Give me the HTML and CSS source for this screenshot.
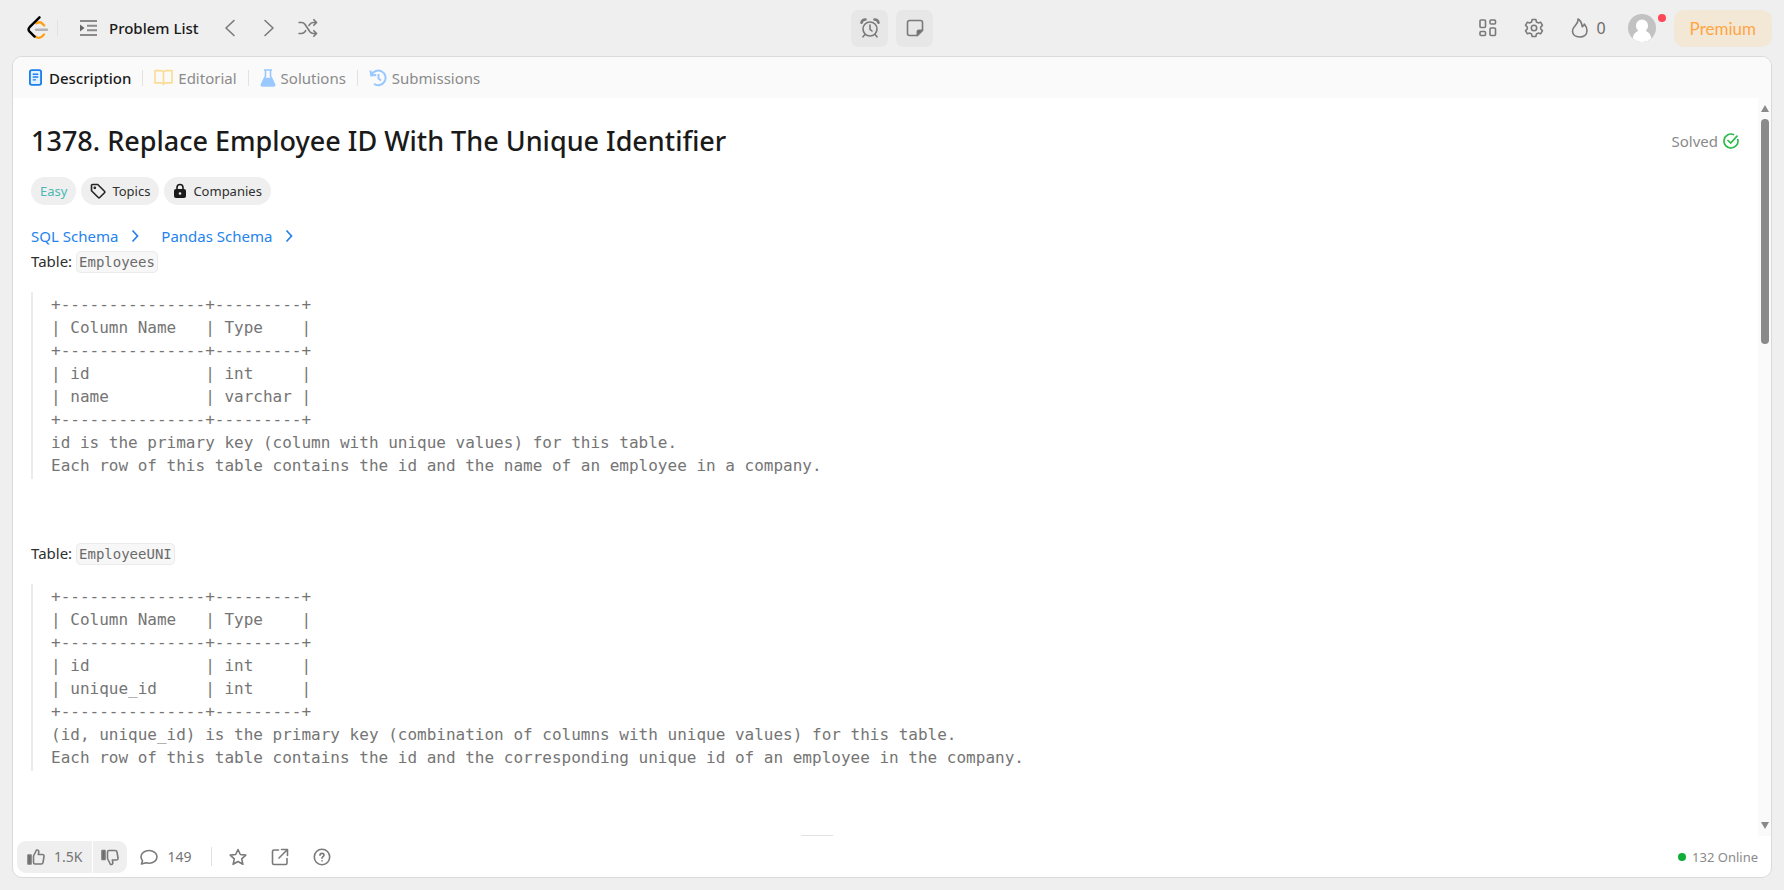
FILE: index.html
```
<!DOCTYPE html>
<html lang="en">
<head>
<meta charset="utf-8">
<title>1378. Replace Employee ID With The Unique Identifier</title>
<link rel="stylesheet" href="styles.css">
</head>
<body>
<header class="topbar">
  <nav class="topbar-left">
    <a class="logo" href="#" aria-label="Home">
      <svg width="22" height="26" viewBox="0 0 22 26" fill="none" stroke-linecap="round" stroke-width="2.4">
        <path d="M9.500 8.300c2-1.400 3.900-1.300 5.500 0l2.200 2.200" stroke="#ffa116"/>
        <path d="M17 19.500l-2 2c-1.900 1.800-4.600 1.800-6.500 0" stroke="#ffa116"/>
        <path d="M9 14.700H20" stroke="#b3b3b3"/>
        <path d="M12.500 2.300L2.600 12.200c-1.300 1.400-1.300 3.100 0 4.500l5 4.900" stroke="#000"/>
      </svg>
    </a>
    <span class="rule"></span>
    <button class="list-button">
      <svg width="18" height="18" viewBox="0 0 18 18" fill="none" stroke="#8a8a8a" stroke-width="2">
        <path d="M1 2h17M8 6.700h10M8 11.300h10M1 16h17"/><path d="M1 5.500v7l4.500-3.500z" fill="#666" stroke="none"/>
      </svg>
      <span>Problem List</span>
    </button>
    <button class="icon-button" aria-label="Previous">
      <svg width="20" height="20" viewBox="0 0 20 20" class="stroke"><path d="M14 2.500L6 10l8 7.500"/></svg>
    </button>
    <button class="icon-button" aria-label="Next">
      <svg width="20" height="20" viewBox="0 0 20 20" class="stroke"><path d="M6 2.500l8 7.500-8 7.500"/></svg>
    </button>
    <button class="icon-button" aria-label="Shuffle">
      <svg width="20" height="20" viewBox="0 0 20 20" class="stroke"><path d="M1 4.500h2.500c1.600 0 2.500.6 3.400 1.800l5 7.400c.9 1.200 1.800 1.800 3.400 1.800h3.200M1 15.500h2.500c1.600 0 2.500-.6 3.400-1.800l.7-1M11 7.500l.9-1.200c.9-1.200 1.800-1.800 3.400-1.800h3.200M15.800 1.700l2.800 2.800-2.800 2.800M15.800 12.700l2.800 2.800-2.800 2.800"/></svg>
    </button>
  </nav>
  <div class="topbar-center">
    <button class="tile" aria-label="Timer">
      <svg width="20" height="20" viewBox="0 0 20 20" class="stroke"><circle cx="10" cy="11" r="7"/><path d="M10 7v4.300l2 1.700M5 16.500l-2 2.300M15 16.500l2 2.300"/><path d="M1.500 4.700C1.900 3 3.500 1.500 5.500 1.500M18.500 4.700C18.100 3 16.500 1.500 14.500 1.500" stroke-width="2.600"/></svg>
    </button>
    <button class="tile" aria-label="Notes">
      <svg width="20" height="20" viewBox="0 0 20 20" class="stroke"><path d="M4.500 2.500h11a2 2 0 0 1 2 2v7.800l-5.200 5.200H4.500a2 2 0 0 1-2-2v-11a2 2 0 0 1 2-2z"/><path d="M17.500 12.300h-3.700a1.500 1.500 0 0 0-1.500 1.500v3.700z" fill="#6b6b6b"/></svg>
    </button>
  </div>
  <div class="topbar-right">
    <button class="icon-button" aria-label="Layouts">
      <svg width="20" height="20" viewBox="0 0 20 20" class="stroke"><rect x="2" y="2" width="5.500" height="7.500" rx="1"/><rect x="12" y="2" width="5.500" height="4" rx="1"/><rect x="2" y="13.500" width="5.500" height="4" rx="1"/><rect x="12" y="10" width="5.500" height="7.500" rx="1"/></svg>
    </button>
    <button class="icon-button" aria-label="Settings">
      <svg width="20" height="20" viewBox="0 0 20 20" class="stroke"><circle cx="10" cy="10" r="2.700"/><path d="M8.200 1.500h3.600l.7 2.500 1.600.9 2.500-.7 1.900 3.100-1.800 1.800v1.800l1.800 1.800-1.900 3.100-2.500-.7-1.600.9-.7 2.500H8.200L7.500 16l-1.600-.9-2.500.7-1.900-3.100 1.800-1.800V9.100L1.500 7.300l1.900-3.100 2.500.7L7.500 4z"/></svg>
    </button>
    <button class="streak" aria-label="Streak">
      <svg width="20" height="20" viewBox="0 0 20 20" class="stroke"><path d="M8 1c.4 2.700-.7 4.200-2.500 6.300C3.700 9.300 2.500 10.700 2.500 13c0 3.700 3 6 7.200 6s7.300-2.500 7.300-6.200c0-2.600-1-4.800-2.700-6.800-.2 1.500-.9 2.300-2 2.700C11.800 5.500 10.700 2.500 8 1z"/></svg>
      <span>0</span>
    </button>
    <button class="avatar" aria-label="Profile">
      <svg width="28" height="28" viewBox="0 0 28 28"><circle cx="14" cy="14" r="14" fill="#c2c2c2"/><path d="M14 5.500a6 6 0 0 0-6 6.200c0 2.300 1 3.900 2.300 5.100C7.500 18 5 20.500 4.700 24.500a14 14 0 0 0 18.600 0c-.3-4-2.800-6.500-5.600-7.700 1.300-1.200 2.300-2.800 2.300-5.100a6 6 0 0 0-6-6.200z" fill="#fff"/></svg>
      <span class="alert"></span>
    </button>
    <a class="premium" href="#">Premium</a>
  </div>
</header>
<main class="panel">
  <nav class="tabs">
    <a class="tab active" href="#">
      <svg width="13" height="17" viewBox="0 0 14 18" fill="none" stroke="#1a80f0" stroke-width="2"><rect x="1" y="1" width="12" height="16" rx="2" fill="#e5f1ff"/><path d="M4 5.500h6M4 8.500h6M4 11.500h3.500" stroke-width="1.500"/></svg>
      <span>Description</span></a>
    <span class="rule"></span>
    <a class="tab" href="#">
      <svg width="19" height="17" viewBox="0 0 20 18" fill="none" stroke="#fbdc95" stroke-width="1.800" stroke-linejoin="round"><path d="M10 3.500C9.500 2.200 8.500 1.700 7 1.700H1v13h6c1.500 0 2.500.5 3 1.600.5-1.100 1.500-1.600 3-1.600h6v-13h-6c-1.500 0-2.500.5-3 1.800zM10 3.500v12.500"/></svg>
      <span>Editorial</span></a>
    <span class="rule"></span>
    <a class="tab" href="#">
      <svg width="16" height="18" viewBox="0 0 16 18" fill="none" stroke="#99c8ff" stroke-width="1.600" stroke-linejoin="round"><path d="M4 1h8M5.500 1v6L1.500 15.500c-.3.900.1 1.500 1 1.500h11c.9 0 1.300-.6 1-1.500L10.500 7V1"/><path d="M4.500 9.500h7l3 6.500H1.500z" fill="#99c8ff"/></svg>
      <span>Solutions</span></a>
    <span class="rule"></span>
    <a class="tab" href="#">
      <svg width="18" height="18" viewBox="0 0 18 18" fill="none" stroke="#99c8ff" stroke-width="2"><path d="M2.500 6A7.300 7.300 0 1 1 5 14.800M1.500 1.500l.7 5 5-.5M9.500 5v4.500l2.500 2"/></svg>
      <span>Submissions</span></a>
  </nav>
  <div class="viewport">
    <article class="content">
      <div class="heading"><h1>1378. Replace Employee ID With The Unique Identifier</h1>
        <div class="solved"><span>Solved</span>
          <svg width="16" height="16" viewBox="0 0 16 16" fill="none" stroke="#2dbb4d" stroke-width="1.700" stroke-linecap="round"><path d="M10.500 1.500A7 7 0 1 0 14.800 6.500M5 7.500l2.700 2.500L14 3.200"/></svg></div>
      </div>
      <div class="chips">
        <span class="chip easy">Easy</span>
        <button class="chip"><svg width="16" height="16" viewBox="0 0 16 16" fill="none" stroke="#262626" stroke-width="1.600" stroke-linejoin="round"><path d="M1.500 2.500a1 1 0 0 1 1-1h5.200l6.800 6.800a1 1 0 0 1 0 1.400l-4.800 4.800a1 1 0 0 1-1.400 0L1.500 7.700z"/><circle cx="4.800" cy="4.800" r=".6" fill="#262626"/></svg><span>Topics</span></button>
        <button class="chip"><svg width="14" height="16" viewBox="0 0 14 16"><path d="M4 7V4.500a3 3 0 0 1 6 0V7" fill="none" stroke="#1a1a1a" stroke-width="1.600"/><rect x="1" y="6" width="12" height="9" rx="2" fill="#1a1a1a"/><circle cx="7" cy="10.500" r="1.300" fill="#efefef"/></svg><span>Companies</span></button>
      </div>
      <div class="schemas">
        <a href="#">SQL Schema <svg width="8" height="14" viewBox="0 0 8 14"><path d="M1.500 1.500L6.500 7l-5 5.500"/></svg></a>
        <a href="#">Pandas Schema <svg width="8" height="14" viewBox="0 0 8 14"><path d="M1.500 1.500L6.500 7l-5 5.500"/></svg></a>
      </div>
      <p class="table-name">Table: <code>Employees</code></p>
<pre>+---------------+---------+
| Column Name   | Type    |
+---------------+---------+
| id            | int     |
| name          | varchar |
+---------------+---------+
id is the primary key (column with unique values) for this table.
Each row of this table contains the id and the name of an employee in a company.</pre>
      <p class="table-name second">Table: <code>EmployeeUNI</code></p>
<pre>+---------------+---------+
| Column Name   | Type    |
+---------------+---------+
| id            | int     |
| unique_id     | int     |
+---------------+---------+
(id, unique_id) is the primary key (combination of columns with unique values) for this table.
Each row of this table contains the id and the corresponding unique id of an employee in the company.</pre>
    </article>
    <div class="scrollbar"><span class="arrow-up"></span><span class="thumb"></span><span class="arrow-down"></span></div>
    <span class="grip"></span>
  </div>
  <footer class="actions">
    <div class="votes">
      <button class="like"><svg width="18" height="18" viewBox="0 0 18 18" class="stroke"><path d="M1 7h3v9H1z" fill="#6b6b6b"/><path d="M6.500 8L9.500 2c1.500-.3 2.500.5 2.300 2L11.300 6.500h4c1.200 0 1.900.8 1.700 2l-1 6c-.2 1-.8 1.500-1.800 1.500H8c-1 0-1.500-.5-1.500-1.500z"/></svg><span>1.5K</span></button>
      <button class="dislike" aria-label="Dislike"><svg width="18" height="18" viewBox="0 0 18 18" class="stroke"><path d="M1 2.500h3v9H1z" fill="#6b6b6b"/><path d="M6.500 10.500l3 6c1.500.3 2.500-.5 2.300-2L11.300 12h4c1.200 0 1.900-.8 1.700-2l-1-6c-.2-1-.8-1.500-1.800-1.500H8c-1 0-1.500.5-1.500 1.500z"/></svg></button>
    </div>
    <button class="plain"><svg width="18" height="18" viewBox="0 0 18 18" class="stroke"><path d="M9 2.500c4.500 0 8 2.700 8 6.300s-3.500 6.400-8 6.400c-1 0-2-.1-3-.4L1.500 16l1-3.300C1.500 11.600 1 10.300 1 8.800c0-3.600 3.500-6.300 8-6.300z"/></svg><span>149</span></button>
    <span class="rule tall"></span>
    <button class="plain" aria-label="Favorite"><svg width="18" height="18" viewBox="0 0 18 18" class="stroke"><path d="M9 1.500l2.300 5 5.500.6-4.100 3.700 1.200 5.500L9 13.500l-4.900 2.800 1.200-5.500L1.200 7.100l5.500-.6z"/></svg></button>
    <button class="plain" aria-label="Share"><svg width="18" height="18" viewBox="0 0 18 18" class="stroke"><path d="M7.500 2H3a1.500 1.500 0 0 0-1.500 1.500V15A1.500 1.500 0 0 0 3 16.500h11.500A1.500 1.500 0 0 0 16 15v-4.500M10.500 1.500h6v6M16 2L8 10"/></svg></button>
    <button class="plain" aria-label="Help"><svg width="18" height="18" viewBox="0 0 18 18" class="stroke"><circle cx="9" cy="9" r="7.700"/><path d="M7 7.300c0-2.600 4-2.600 4 0 0 1.400-2 1.500-2 3M9 12.700v.3"/></svg></button>
    <span class="online">132 Online</span>
  </footer>
</main>
</body>
</html>
```

FILE: styles.css
```
* { box-sizing: border-box; }
body {
  margin: 0;
  height: 100vh;
  display: flex;
  flex-direction: column;
  background: #efefef;
  color: #303030;
  font-family: "Noto Sans", "Open Sans", sans-serif;
  font-size: 16px;
  overflow: hidden;
}
button { border: 0; padding: 0; background: none; font: inherit; color: inherit; }
a { color: inherit; text-decoration: none; }
svg { display: block; flex: none; }
.stroke { fill: none; stroke: #7a7a7a; stroke-width: 1.6px; stroke-linecap: round; stroke-linejoin: round; }
.rule { width: 1px; height: 16px; background: #e2e2e2; }

.topbar {
  display: grid;
  grid-template-columns: 1fr auto 1fr;
  align-items: center;
  height: 56px;
  padding: 0 12px;
}
.topbar-left, .topbar-center, .topbar-right { display: flex; align-items: center; }
.topbar-left { padding-left: 15px; }
.topbar-left .rule { margin: 0 21px 0 8px; }
.list-button { display: flex; align-items: center; gap: 12px; margin-right: 21px; font-weight: 500; font-size: 15px; color: #1a1a1a; }
.topbar-left .icon-button { margin-right: 19px; }
.topbar-left .icon-button:last-child { margin: 0; }
.topbar-center { gap: 8px; }
.tile { display: grid; place-items: center; width: 37px; height: 37px; border-radius: 7px; background: #e7e7e7; }
.topbar-right { justify-content: flex-end; }
.topbar-right .icon-button { margin-right: 26px; }
.streak { display: flex; align-items: center; gap: 6px; margin-right: 22px; color: #6b6b6b; }
.avatar { position: relative; margin-right: 18px; }
.alert { position: absolute; top: 0; right: -10px; width: 8px; height: 8px; border-radius: 50%; background: #ff4757; }
.premium { padding: 0 16px; line-height: 37px; border-radius: 10px; background: #f3e7d6; color: #ffa643; font-family: Lato, sans-serif; font-size: 17px; }

.panel {
  flex: 1;
  min-height: 0;
  margin: 0 12px 12px;
  display: flex;
  flex-direction: column;
  border: 1px solid #dadada;
  border-radius: 10px;
  background: #fff;
  overflow: hidden;
}
.tabs { display: flex; align-items: center; height: 41px; padding-left: 16px; background: #fafafa; color: #8a8a8a; font-size: 15px; }
.tab { display: flex; align-items: center; gap: 5px; }
.tab.active { gap: 7px; color: #1a1a1a; font-weight: 500; }
.tab span { line-height: 20px; }
.tabs .rule { margin: 0 11px; }

.viewport { position: relative; flex: 1; min-height: 0; display: flex; }
.content { flex: 1; padding: 23px 19px 0 18px; overflow: hidden; }
.heading { display: flex; justify-content: space-between; align-items: center; }
h1 { margin: 0; font-size: 27px; line-height: 40px; font-weight: 500; color: #1a1a1a; }
.solved { display: flex; align-items: center; gap: 5px; font-size: 15px; color: #8a8a8a; }
.chips { display: flex; gap: 5px; margin-top: 16px; }
.chip { display: flex; align-items: center; gap: 6px; height: 28px; padding: 0 9px; border-radius: 14px; background: #efefef; font-size: 13px; }
.chip.easy { color: #4cb8b2; }
.schemas { display: flex; gap: 22px; margin-top: 19px; line-height: 24px; font-size: 15px; color: #2483ec; }
.schemas a { display: flex; align-items: center; gap: 13px; }
.schemas svg { fill: none; stroke: currentColor; stroke-width: 1.7px; }
.table-name { margin: 0; line-height: 26px; font-size: 15px; }
.table-name.second { margin-top: 61px; }
code { padding: 2px; border: 1px solid #ebebeb; border-radius: 5px; background: #f7f7f7; color: #6b6b6b; font: 14px "DejaVu Sans Mono", monospace; }
pre { margin: 18px 0 0; padding: 1px 0 2px 18px; border-left: 2px solid #ebebeb; color: #757575; font: 16px/23px "DejaVu Sans Mono", monospace; }
.scrollbar { display: flex; flex-direction: column; align-items: center; width: 13px; padding: 7px 0; background: #fafafa; }
.arrow-up, .arrow-down { border: 4px solid transparent; }
.arrow-up { border-top: 0; border-bottom: 7px solid #8a8a8a; }
.arrow-down { margin-top: auto; border-bottom: 0; border-top: 7px solid #8a8a8a; }
.thumb { width: 8px; height: 225px; margin-top: 7px; border-radius: 4px; background: #8a8a8a; }
.grip { position: absolute; left: 50%; bottom: 0; width: 32px; height: 1px; margin-left: -91px; background: #e2e2e2; }

.actions { display: flex; align-items: center; height: 41px; padding: 0 13px 0 4px; color: #757575; font-size: 14px; }
.votes { display: flex; gap: 1px; border-radius: 9px; overflow: hidden; }
.votes button { display: flex; align-items: center; height: 32px; background: #efefef; }
.like { gap: 9px; padding: 0 10px; }
.dislike { padding: 0 8px; }
.plain { display: flex; align-items: center; gap: 9px; margin-left: 24px; }
.votes + .plain { margin-left: 13px; }
.rule.tall { height: 19px; margin-left: 20px; margin-right: -7px; }
.online { display: flex; align-items: center; gap: 6px; margin-left: auto; font-size: 13px; color: #8a8a8a; }
.online::before { content: ""; width: 8px; height: 8px; border-radius: 50%; background: #0fae37; }
```
